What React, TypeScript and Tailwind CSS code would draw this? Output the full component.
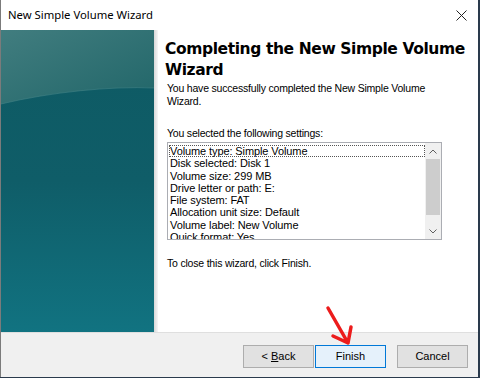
import React from 'react';

const settings = [
  'Volume type: Simple Volume',
  'Disk selected: Disk 1',
  'Volume size: 299 MB',
  'Drive letter or path: E:',
  'File system: FAT',
  'Allocation unit size: Default',
  'Volume label: New Volume',
  'Quick format: Yes',
];

const SidePanel = () => (
  <div className="relative w-[153px] h-full overflow-hidden bg-gradient-to-b from-[#0e5a63] via-[#0f5d68] to-[#117381]">
    {/* glossy curve at the top */}
    <svg className="absolute inset-0" width="153" height="302" viewBox="0 0 153 302">
      <defs>
        <linearGradient id="gloss" x1="0" y1="0" x2="1" y2="1">
          <stop offset="0" stopColor="#417d7f" />
          <stop offset="1" stopColor="#216669" />
        </linearGradient>
      </defs>
      <path d="M0 0 H153 V58 C110 56 50 62 0 74 Z" fill="url(#gloss)" />
      <path d="M0 74 C50 62 110 56 153 58" stroke="#4b8a8b" strokeOpacity="0.5" fill="none" />
    </svg>
  </div>
);

const Listbox = () => (
  <div className="flex h-[98px] w-[275px] border border-[#abadb3] bg-white">
    <div className="flex-1 overflow-hidden pl-[1px] pt-[2px]">
      {settings.map((s, i) => (
        <div
          key={s}
          className={`h-[12.3px] pl-[1px] leading-[12px] whitespace-nowrap tracking-[-0.1px] ${
            i === 0 ? 'outline outline-1 outline-dotted outline-[#555] -outline-offset-1' : ''
          }`}
        >
          {s}
        </div>
      ))}
    </div>
    {/* scrollbar */}
    <div className="flex w-[16px] flex-col bg-[#f0f0f0]">
      <div className="flex h-[16px] items-center justify-center">
        <svg width="8" height="5" viewBox="0 0 8 5">
          <path d="M0.5 4.5 L4 1 L7.5 4.5" stroke="#606060" fill="none" />
        </svg>
      </div>
      <div className="mx-[1px] h-[56px] bg-[#cdcdcd]" />
      <div className="flex-1" />
      <div className="flex h-[16px] items-center justify-center">
        <svg width="8" height="5" viewBox="0 0 8 5">
          <path d="M0.5 0.5 L4 4 L7.5 0.5" stroke="#606060" fill="none" />
        </svg>
      </div>
    </div>
  </div>
);

export default function App() {
  return (
    <div className="h-[378px] w-[480px] bg-[#2a3a4c] font-['Liberation_Sans',Arial,sans-serif] text-[11px] text-black">
      <div className="relative flex h-[377px] w-[478px] flex-col border-l border-[#7b7b7b] bg-white">
        {/* title bar */}
        <div className="flex h-[30px] items-center justify-between pl-[7px] pr-[11px]">
          <span className="font-['Noto_Sans',sans-serif] text-[11.3px] text-black">New Simple Volume Wizard</span>
          <svg width="11" height="11" viewBox="0 0 11 11">
            <path d="M0.5 0.5 L10.5 10.5 M10.5 0.5 L0.5 10.5" stroke="#222" strokeWidth="1" />
          </svg>
        </div>

        {/* body */}
        <div className="flex h-[302px]">
          <SidePanel />
          <div className="w-[4px] bg-gradient-to-r from-[#d8d8d8] to-[#f6f6f6]" />
          <div className="flex flex-1 flex-col pl-[7px] pt-[9px]">
            <h1 className="font-['DejaVu_Sans',Verdana,sans-serif] text-[15.5px] font-bold leading-[21px] tracking-[-0.4px]">
              Completing the New Simple Volume
              <br />
              Wizard
            </h1>
            <div className="text-[10.5px] tracking-[-0.2px]">
              <p className="mt-[1px] pl-[2px] leading-[13px]">
                You have successfully completed the New Simple Volume
                <br />
                Wizard.
              </p>
              <p className="mt-[19px] pl-[2px] leading-[13px]">You selected the following settings:</p>
            </div>
            <div className="ml-[2px] mt-[2px]">
              <Listbox />
            </div>
            <p className="mt-[17px] pl-[2px] text-[10.5px] leading-[13px] tracking-[-0.2px]">
              To close this wizard, click Finish.
            </p>
          </div>
        </div>

        {/* button bar */}
        <div className="flex flex-1 items-start justify-end border-t border-[#dfdfdf] bg-[#f0f0f0] pr-[10px] pt-[12px]">
          <button className="h-[23px] w-[71px] border border-[#adadad] bg-[#e1e1e1]">
            &lt; <span className="underline">B</span>ack
          </button>
          <button className="ml-[1px] h-[23px] w-[71px] border border-[#0078d7] bg-[#e5f1fb]">Finish</button>
          <button className="ml-[11px] h-[23px] w-[71px] border border-[#adadad] bg-[#e1e1e1]">Cancel</button>
        </div>

        {/* red annotation arrow */}
        <svg className="absolute left-[320px] top-[300px]" width="40" height="50" viewBox="0 0 40 50">
          <path d="M7 8 L27 43 M27 43 L12 36 M27 43 L30 27" stroke="#ec1c1c" strokeWidth="3.5" strokeLinecap="round" strokeLinejoin="round" fill="none" />
        </svg>
      </div>
    </div>
  );
}
